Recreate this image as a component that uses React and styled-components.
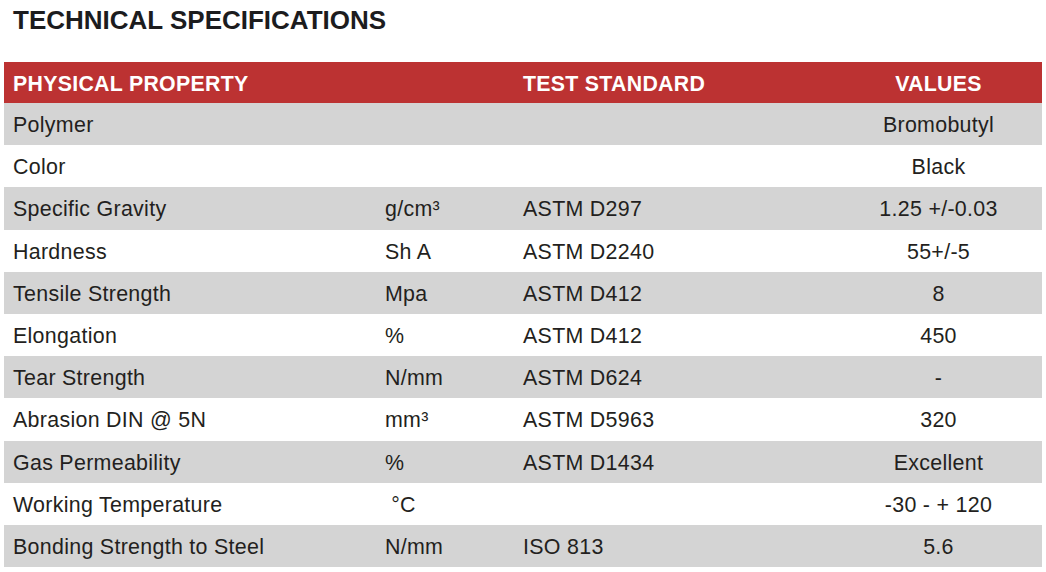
import { styled, createGlobalStyle } from "styled-components"

const GlobalStyle = createGlobalStyle`
  html, body {
    margin: 0;
    padding: 0;
    background: #ffffff;
  }
  body {
    font-family: "Liberation Sans", Arial, Helvetica, sans-serif;
    color: #231f20;
  }
`

const SPECS = [
  { property: "Polymer", unit: "", standard: "", value: "Bromobutyl" },
  { property: "Color", unit: "", standard: "", value: "Black" },
  { property: "Specific Gravity", unit: "g/cm³", standard: "ASTM D297", value: "1.25 +/-0.03" },
  { property: "Hardness", unit: "Sh A", standard: "ASTM D2240", value: "55+/-5" },
  { property: "Tensile Strength", unit: "Mpa", standard: "ASTM D412", value: "8" },
  { property: "Elongation", unit: "%", standard: "ASTM D412", value: "450" },
  { property: "Tear Strength", unit: "N/mm", standard: "ASTM D624", value: "-" },
  { property: "Abrasion DIN @ 5N", unit: "mm³", standard: "ASTM D5963", value: "320" },
  { property: "Gas Permeability", unit: "%", standard: "ASTM D1434", value: "Excellent" },
  { property: "Working Temperature", unit: "\u00a0°C", standard: "", value: "-30 - + 120" },
  { property: "Bonding Strength to Steel", unit: "N/mm", standard: "ISO 813", value: "5.6" },
]

const Page = styled.div`
  padding: 5px 4px 0 4px;
  width: 1038px;
`

const Title = styled.h2`
  margin: 0 0 27px 0;
  padding-left: 9px;
  font-size: 26px;
  line-height: 30px;
  font-weight: 700;
  color: #1c1c1e;
`

const Table = styled.div`
  display: flex;
  flex-direction: column;
`

const Row = styled.div`
  box-sizing: border-box;
  display: grid;
  grid-template-columns: 372px 138px 312px 1fr;
  align-items: center;
  padding: 3px 0 0 9px;
  height: ${(props) => (props.header ? "41px" : "42.2px")};
  background: ${(props) =>
    props.header ? "#bc3232" : props.shaded ? "#d4d4d4" : "#ffffff"};
  color: ${(props) => (props.header ? "#ffffff" : "#231f20")};
  font-size: ${(props) => (props.header ? "21.3px" : "21.4px")};
  font-weight: ${(props) => (props.header ? 700 : 400)};
  letter-spacing: 0.3px;
`

const Cell = styled.div`
  white-space: nowrap;
  text-align: ${(props) => (props.center ? "center" : "left")};
`

export default function App() {
  return (
    <Page>
      <GlobalStyle />
      <Title>TECHNICAL SPECIFICATIONS</Title>
      <Table>
        <Row header>
          <Cell>PHYSICAL PROPERTY</Cell>
          <Cell />
          <Cell>TEST STANDARD</Cell>
          <Cell center>VALUES</Cell>
        </Row>
        {SPECS.map((spec, index) => (
          <Row key={spec.property} shaded={index % 2 === 0}>
            <Cell>{spec.property}</Cell>
            <Cell>{spec.unit}</Cell>
            <Cell>{spec.standard}</Cell>
            <Cell center>{spec.value}</Cell>
          </Row>
        ))}
      </Table>
    </Page>
  )
}
